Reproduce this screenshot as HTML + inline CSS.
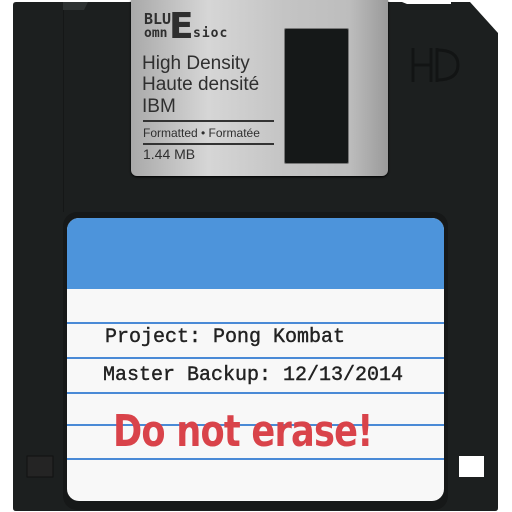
<!DOCTYPE html>
<html><head><meta charset="utf-8"><style>
*{margin:0;padding:0;box-sizing:border-box}
body{width:512px;height:512px;background:#fff;position:relative;overflow:hidden;font-family:"Liberation Sans",sans-serif}
.a{position:absolute}
#shutter{left:131px;top:0;width:257px;height:176px;background:linear-gradient(90deg,#a9a9a9,#d6d6d6 30%,#c4c4c4 60%,#bdbdbd 85%,#9a9a9a);border-radius:0 0 6px 6px;box-shadow:0 1px 2px #000}
.t{color:#2f2f2f;position:absolute;white-space:nowrap}
</style></head><body>
<svg class="a" style="left:0;top:0" width="512" height="512">
<path d="M13 5 Q13 2 16 2 L402 2 L407 4 L451 4 L451 2 L470 2 L498 33 L498 508 Q498 511 495 511 L16 511 Q13 511 13 508 Z" fill="#1c1f1f"/>
<path d="M63 2 L88 2 L84 10 L63 10Z" fill="#2e3232"/>
<line x1="63.5" y1="10" x2="63.5" y2="212" stroke="#151717" stroke-width="1"/>
<rect x="63" y="212" width="385" height="298" rx="14" fill="#161818"/>
<rect x="27" y="456" width="26" height="21" fill="#242424" stroke="#111"/>
<rect x="459" y="456" width="25" height="21" fill="#fff"/>
<g fill="none" stroke="#121414" stroke-width="3">
<path d="M413 48 V82 M431 48 V82 M413 65 H431"/>
<path d="M437 48 V82 M437 50 Q458 50 458 65 Q458 80 437 80"/>
</g>
</svg>
<div class="a" id="shutter"></div>
<div class="a" style="left:284px;top:28px;width:65px;height:136px;background:#151818;border:1px solid #777;border-radius:2px"></div>
<div class="t" style="left:144px;top:10px;font:bold 15px 'DejaVu Sans Mono',monospace">BLU</div>
<div class="t" style="left:144px;top:26px;font:bold 13px 'DejaVu Sans Mono',monospace">omn</div>
<div class="t" style="left:169px;top:6px;font:bold 36px 'DejaVu Sans',sans-serif">E</div>
<div class="t" style="left:193px;top:26px;font:bold 13px 'DejaVu Sans Mono',monospace;letter-spacing:1px">sioc</div>
<div class="t" style="left:142px;top:53px;font-size:19px">High Density</div>
<div class="t" style="left:142px;top:74px;font-size:19px">Haute densité</div>
<div class="t" style="left:142px;top:96px;font-size:19px">IBM</div>
<div class="a" style="left:143px;top:120px;width:131px;height:2px;background:#333"></div>
<div class="t" style="left:143px;top:126px;font-size:12px">Formatted • Formatée</div>
<div class="a" style="left:143px;top:143px;width:131px;height:2px;background:#333"></div>
<div class="t" style="left:143px;top:146px;font-size:14px">1.44 MB</div>
<div class="a" style="left:67px;top:218px;width:377px;height:283px;border-radius:12px;overflow:hidden;background:#f8f8f8">
<div class="a" style="left:0;top:0;width:100%;height:71px;background:#4d94db"></div>
<div class="a" style="left:0;top:104px;width:100%;height:2px;background:#4a8ad6"></div>
<div class="a" style="left:0;top:139px;width:100%;height:2px;background:#4a8ad6"></div>
<div class="a" style="left:0;top:174px;width:100%;height:2px;background:#4a8ad6"></div>
<div class="a" style="left:0;top:206px;width:100%;height:2px;background:#4a8ad6"></div>
<div class="a" style="left:0;top:240px;width:100%;height:2px;background:#4a8ad6"></div>
<div class="t" style="left:38px;top:108px;font:20px 'Liberation Mono',monospace;color:#222;-webkit-text-stroke:0.4px #222">Project: Pong Kombat</div>
<div class="t" style="left:36px;top:146px;font:20px 'Liberation Mono',monospace;color:#222;-webkit-text-stroke:0.4px #222">Master Backup: 12/13/2014</div>
<div class="t" style="left:46px;top:188px;font:bold 44px 'DejaVu Sans',sans-serif;color:#d9434a;letter-spacing:-1px;transform:scaleX(0.8);transform-origin:left">Do not erase!</div>
</div>
</body></html>
